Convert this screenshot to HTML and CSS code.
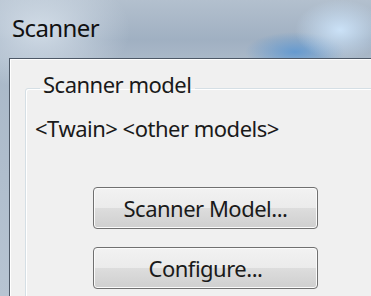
FILE: index.html
```html
<!DOCTYPE html>
<html>
<head>
<meta charset="utf-8">
<link rel="stylesheet" href="styles.css">
</head>
<body>
<div class="window">
  <div class="titlebar">Scanner</div>
  <div class="client">
    <fieldset class="group">
      <legend class="group-label">Scanner model</legend>
      <div class="models">&lt;Twain&gt; &lt;other models&gt;</div>
      <div class="buttons">
        <button class="btn">Scanner Model...</button>
        <button class="btn">Configure...</button>
      </div>
    </fieldset>
  </div>
</div>
</body>
</html>
```

FILE: styles.css
```css
html, body {
  margin: 0;
  padding: 0;
}
body {
  width: 371px;
  height: 296px;
  overflow: hidden;
  background: #eef1f5;
  font-family: "Noto Sans", "Open Sans", sans-serif;
  color: #1a1a1a;
}
.window {
  box-sizing: border-box;
  height: 296px;
  width: 371px;
  overflow: hidden;
  display: flex;
  flex-direction: column;
  padding: 3px 0 0 3px;
  background:
    radial-gradient(ellipse 45px 30px at 340px 30px, rgba(205,228,250,0.95), rgba(205,228,250,0) 100%),
    radial-gradient(ellipse 50px 20px at 295px 52px, rgba(80,145,210,0.75), rgba(80,145,210,0) 100%),
    radial-gradient(ellipse 90px 60px at 40px 30px, rgba(215,225,235,0.9), rgba(215,225,235,0) 100%),
    linear-gradient(to bottom, #b3c0ce 0px, #a0b0c2 40px, #a9b8c8 58px, #b7c4d2 100%);
}
.titlebar {
  flex: 0 0 auto;
  height: 55px;
  box-sizing: border-box;
  padding: 9px 0 0 9px;
  font-size: 24px;
  line-height: 32px;
  letter-spacing: -0.6px;
  color: #111;
}
.client {
  flex: 1 1 auto;
  min-height: 0;
  margin-left: 6px;
  border-top: 1px solid #4d5866;
  border-left: 1px solid #4d5866;
  box-shadow: inset 1px 1px 0 #ffffff;
  background: #f0f0f0;
  padding: 12px 0 0 15px;
  overflow: hidden;
}
.group {
  margin: 0;
  width: 420px;
  box-sizing: border-box;
  border: 1px solid #d5dfe5;
  border-radius: 3px;
  box-shadow: inset 1px 1px 0 #ffffff, 1px 1px 0 #ffffff;
  padding: 0 0 20px 9px;
  font-size: 22px;
  letter-spacing: -0.5px;
}
.group-label {
  margin-left: 5px;
  padding: 0 4px 8px 3px;
  line-height: 26px;
}
.models {
  line-height: 26px;
  margin-top: 10px;
}
.buttons {
  display: flex;
  flex-direction: column;
  align-items: flex-start;
  gap: 18px;
  margin-top: 46px;
  margin-left: 58px;
}
.btn {
  width: 225px;
  height: 42px;
  border: 1px solid #707070;
  border-radius: 4px;
  background: linear-gradient(to bottom, #f2f2f2 0%, #ebebeb 50%, #dddddd 50%, #cfcfcf 100%);
  box-shadow: inset 0 0 0 1px #fbfbfb;
  font-family: inherit;
  font-size: 22px;
  letter-spacing: -0.5px;
  line-height: 26px;
  color: #1a1a1a;
  padding: 0;
}
```
